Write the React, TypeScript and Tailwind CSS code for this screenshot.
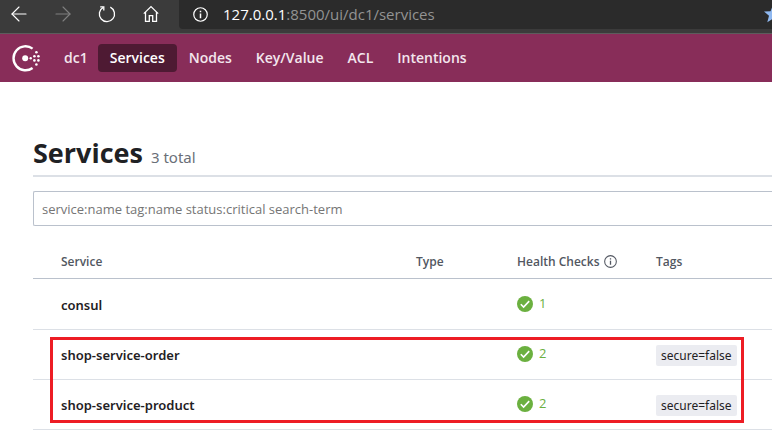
import { ArrowLeft, ArrowRight } from "lucide-react";

type Service = { name: string; checks: number; tags: string[] };

const links = ["Services", "Nodes", "Key/Value", "ACL", "Intentions"];

const services: Service[] = [
  { name: "consul", checks: 1, tags: [] },
  { name: "shop-service-order", checks: 2, tags: ["secure=false"] },
  { name: "shop-service-product", checks: 2, tags: ["secure=false"] },
];

function ReloadIcon() {
  return (
    <svg width="18" height="18" viewBox="0 0 18 18" fill="none" stroke="currentColor" strokeWidth="1.3">
      <path d="M12.3 2.2A7.6 7.6 0 1 1 5.2 2.4" />
      <path d="M2.2 1.8h3.6v3.8" />
    </svg>
  );
}

function HomeIcon() {
  return (
    <svg width="16" height="18" viewBox="0 0 16 18" fill="none" stroke="currentColor" strokeWidth="1.3">
      <path d="M.8 8.6 8 1.6l7.2 7" />
      <path d="M2.5 7v9.4h3.8v-5.8h3.4v5.8h3.8V7" />
    </svg>
  );
}

function InfoIcon({ size }: { size: number }) {
  return (
    <svg width={size} height={size} viewBox="0 0 16 16" fill="none" stroke="currentColor" strokeWidth="1.3">
      <circle cx="8" cy="8" r="7.2" />
      <path d="M8 7v5" strokeWidth="1.6" />
      <path d="M8 4v1.6" strokeWidth="1.6" />
    </svg>
  );
}

function StarIcon() {
  return (
    <svg width="18" height="18" viewBox="0 0 18 18" fill="#8fb8f0">
      <path d="m9 0 2.5 6.2 6.5.4-5 4.2 1.7 6.5L9 13.6l-5.7 3.7L5 10.8 0 6.6l6.5-.4z" />
    </svg>
  );
}

function ConsulLogo() {
  return (
    <svg width="28" height="28" viewBox="0 0 28 28" fill="#fff">
      <path d="M20.6 4.6A12 12 0 1 0 20.6 24" fill="none" stroke="#fff" strokeWidth="2.4" />
      <circle cx="13.2" cy="14.3" r="3" />
      <circle cx="18.7" cy="14.3" r="1.2" />
      <circle cx="22.4" cy="12.3" r="1.3" />
      <circle cx="22.4" cy="16.4" r="1.3" />
      <circle cx="26.4" cy="12.3" r="1.3" />
      <circle cx="26.4" cy="16.4" r="1.3" />
      <circle cx="24.4" cy="8.2" r="1.3" />
      <circle cx="24.4" cy="20.5" r="1.3" />
    </svg>
  );
}

function PassingIcon() {
  return (
    <svg width="16" height="16" viewBox="0 0 16 16">
      <circle cx="8" cy="8" r="8" fill="#6bb03f" />
      <path d="m3.8 8.3 2.8 2.8 5.6-6" fill="none" stroke="#fff" strokeWidth="1.6" />
    </svg>
  );
}

function BrowserBar() {
  return (
    <div className="flex h-[34px] items-start justify-between overflow-hidden border-b border-[#5c5c5c] bg-[#3b3b3b] text-white">
      <div className="flex h-7 flex-none items-center">
        <button aria-label="Back" className="ml-[7px] flex w-6 justify-center">
          <ArrowLeft size={24} strokeWidth={1.1} />
        </button>
        <button aria-label="Forward" className="ml-5 flex w-6 justify-center text-[#808080]">
          <ArrowRight size={24} strokeWidth={1.1} />
        </button>
        <button aria-label="Reload" className="ml-5 flex w-6 justify-center">
          <ReloadIcon />
        </button>
        <button aria-label="Home" className="ml-5 flex w-6 justify-center">
          <HomeIcon />
        </button>
      </div>
      <div className="ml-4 flex h-[29px] flex-1 items-center overflow-hidden rounded-bl bg-[#2b2b2b] pb-px pl-[14px]">
        <button aria-label="Site information" className="flex-none">
          <InfoIcon size={15} />
        </button>
        <span className="ml-[15px] flex-1 text-[15px] whitespace-nowrap text-[#939393]">
          <span className="text-white">127.0.0.1</span>:8500/ui/dc1/services
        </span>
        <button aria-label="Favourite" className="-mr-[10px] flex-none">
          <StarIcon />
        </button>
      </div>
    </div>
  );
}

export default function App() {
  return (
    <div className="min-h-screen overflow-hidden bg-white font-['Open_Sans','Noto_Sans',sans-serif] text-[#1f2124]">
      <BrowserBar />
      <header className="flex h-12 items-center bg-[#882d59] pl-3 text-sm font-semibold text-[#f3e6ed]">
        <a href="#home" aria-label="Consul">
          <ConsulLogo />
        </a>
        <a href="#dc1" className="ml-6">
          dc1
        </a>
        <nav className="ml-[10px] flex">
          {links.map((label, i) => (
            <a
              key={label}
              href={"#" + label}
              className={i === 0 ? "rounded bg-[#4e1a33] px-3 py-1 text-white" : "px-3 py-1"}
            >
              {label}
            </a>
          ))}
        </nav>
      </header>
      <main className="pt-[53px] pl-[33px]">
        <div className="flex items-baseline border-b-2 border-[#dce0e6] pb-1">
          <h1 className="text-[27px] leading-9 font-bold">Services</h1>
          <span className="ml-2 font-['Noto_Sans',sans-serif] text-[15px] text-[#6a6f78]">3 total</span>
        </div>
        <input
          aria-label="Search services"
          placeholder="service:name tag:name status:critical search-term"
          className="mt-[14px] block h-[35px] w-full rounded-l-xs border border-r-0 border-[#bac1cc] px-2 text-[13px] placeholder:text-[#757575]"
        />
        <div className="relative mt-[18px]">
          <table className="w-full table-fixed text-left text-[13px]">
            <thead>
              <tr className="h-[34px] border-b border-[#bac1cc] text-xs text-[#525761]">
                <th className="w-[383px] pt-0.5 pl-7 font-semibold">Service</th>
                <th className="w-[101px] pt-0.5 font-semibold">Type</th>
                <th className="w-[139px] pt-0.5 font-semibold">
                  <span className="flex items-center gap-1">
                    Health Checks <InfoIcon size={13} />
                  </span>
                </th>
                <th className="pt-0.5 font-semibold">Tags</th>
              </tr>
            </thead>
            <tbody>
              {services.map((service) => (
                <tr key={service.name} className="h-[50px] border-b border-[#dce0e6] first:h-[51px]">
                  <td className="pt-1 pl-7 font-['Noto_Sans',sans-serif] font-semibold">
                    <a href={"#" + service.name}>{service.name}</a>
                  </td>
                  <td />
                  <td>
                    <span className="flex items-center gap-[6px] text-[#6bb03f]">
                      <PassingIcon />
                      {service.checks}
                    </span>
                  </td>
                  <td className="pt-0.5">
                    {service.tags.map((tag) => (
                      <span key={tag} className="inline-block rounded-xs bg-[#ebecf1] px-[5px] font-['Noto_Sans',sans-serif] text-xs leading-[21px]">
                        {tag}
                      </span>
                    ))}
                  </td>
                </tr>
              ))}
            </tbody>
          </table>
          <div className="pointer-events-none absolute top-[93px] right-7 left-[17px] h-[86px] border-3 border-[#ed1c24]" />
        </div>
      </main>
    </div>
  );
}
